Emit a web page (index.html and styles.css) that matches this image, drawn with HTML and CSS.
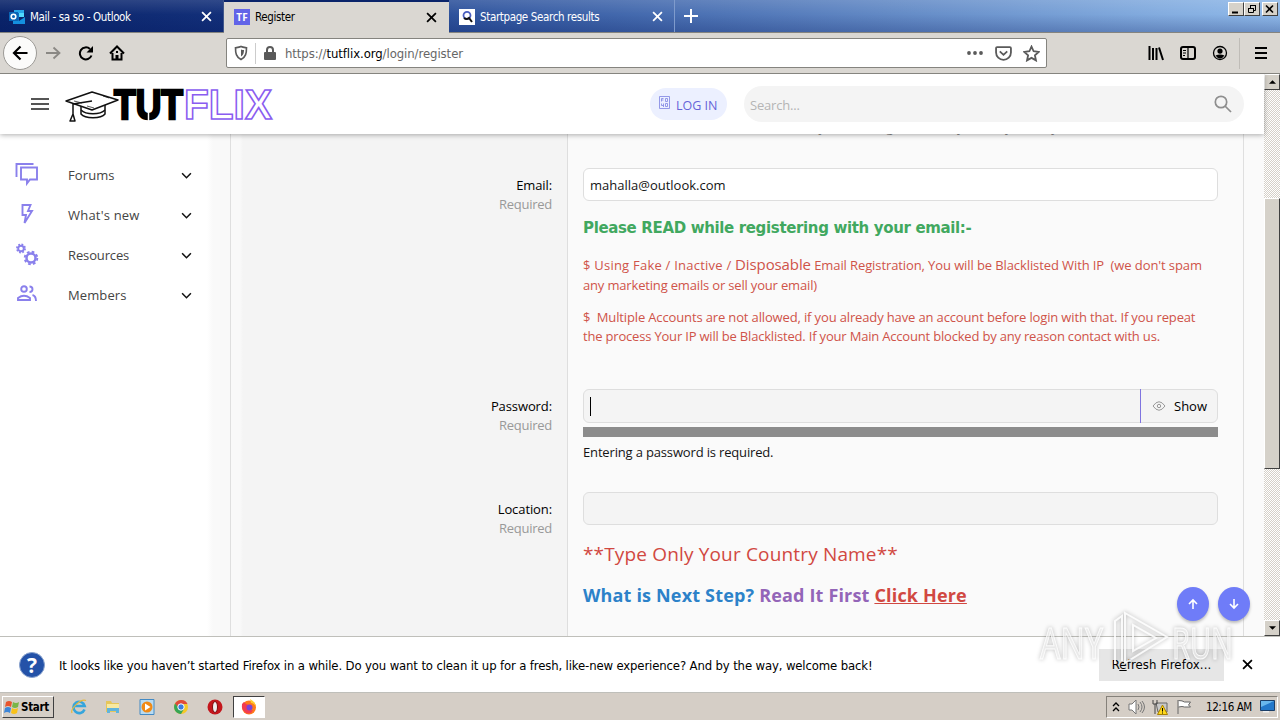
FILE: index.html
```html
<!DOCTYPE html>
<html lang="en">
<head>
  <meta charset="UTF-8">
  <title>Register</title>
  <link rel="stylesheet" href="styles.css">
</head>
<body>
  <div class="tabs">
    <div class="tab tab-first">
      <svg class="favicon" viewBox="0 0 16 16"><path fill="#28a8ea" d="M5 1h10v7H5z"/><path fill="#0f6cbd" d="M5 4h5v8H5z"/><path fill="#50d9ff" d="M10 4h5v4h-5z"/><path fill="#1490df" d="M4 9l6 3 6-4v7H4z"/><path fill="#0a64b4" d="M0 3h9v9H0z"/><circle cx="4.5" cy="7.5" r="2.3" fill="none" stroke="#fff" stroke-width="1.6"/></svg>
      <span class="tab-title">Mail - sa so - Outlook</span>
      <svg class="close" viewBox="0 0 10 10"><path d="M1 1l8 8M9 1L1 9"/></svg>
    </div>
    <div class="tab tab-active">
      <span class="favicon tf">TF</span>
      <span class="tab-title">Register</span>
      <svg class="close" viewBox="0 0 10 10"><path d="M1 1l8 8M9 1L1 9"/></svg>
    </div>
    <div class="tab tab-last">
      <svg class="favicon" viewBox="0 0 16 16"><path fill="#fff" d="M0 0h16v16H0z"/><circle cx="8" cy="6.3" r="3.5" fill="none" stroke="#4a5fc0" stroke-width="1.8"/><path d="M5 9a4 4 0 0 0 5 0l3 4" fill="none" stroke="#111" stroke-width="2"/></svg>
      <span class="tab-title">Startpage Search results</span>
      <svg class="close" viewBox="0 0 10 10"><path d="M1 1l8 8M9 1L1 9"/></svg>
    </div>
    <svg class="plus" viewBox="0 0 14 14"><path d="M7 0v14M0 7h14"/></svg>
    <div class="win-buttons">
      <span class="win-btn"><svg viewBox="0 0 12 10"><path d="M2 8.5h6" stroke-width="2"/></svg></span>
      <span class="win-btn"><svg viewBox="0 0 12 10"><path d="M4.500 4V1.500h5v5H8M2.500 4.500h5v4h-5zM4 1.500h6M2 4.500h6"/></svg></span>
      <span class="win-btn win-close"><svg viewBox="0 0 12 10"><path d="M2 1.500l7 7M9 1.500l-7 7" stroke-width="1.600"/></svg></span>
    </div>
  </div>

  <div class="toolbar">
    <span class="back"><svg viewBox="0 0 16 16"><path d="M15 8H2M8 1.500L1.500 8 8 14.500"/></svg></span>
    <svg class="tool fwd" viewBox="0 0 16 16"><path d="M1 8h13M8.500 2.500L14.500 8 8.500 13.500"/></svg>
    <svg class="tool reload" viewBox="0 0 16 16"><path d="M13.500 10.500A6 6 0 1 1 12 4"/><path d="M15 1v6.500H8.500z" fill="#000" stroke="none"/></svg>
    <svg class="tool home" viewBox="0 0 16 16"><path d="M1 8.500L8 1.500l7 7M3.500 8v6.500h9V8"/><path d="M6.500 15v-5h3v5zM7 6h2v2H7z" fill="#000" stroke="none"/></svg>
    <div class="urlbar">
      <svg class="shield" viewBox="0 0 16 16"><path d="M8 1.500c2 1 4 1 5.500 1.200C13.500 8 13 12 8 14.500 3 12 2.500 8 2.500 2.700 4 2.500 6 2.500 8 1.500z"/><path d="M8 4.500v7C10.500 10 11 7.500 11 5c-1 0-2-.1-3-.5z" fill="#5a5a5a" stroke="none"/></svg>
      <span class="url-sep"></span>
      <svg class="lock" viewBox="0 0 14 16"><path d="M4 8V5a3 3 0 0 1 6 0v3" fill="none" stroke="#5a5a5a" stroke-width="2"/><rect x="1" y="7" width="12" height="8" rx="1" fill="#5a5a5a"/></svg>
      <span class="url">https://<b>tutflix.org</b>/login/register</span>
      <svg class="dots" viewBox="0 0 16 4"><circle cx="2" cy="2" r="1.900"/><circle cx="8" cy="2" r="1.900"/><circle cx="14" cy="2" r="1.900"/></svg>
      <svg class="u-icon" viewBox="0 0 16 16"><path d="M2 2h12q1 0 1 1v4a7 7 0 0 1-14 0V3q0-1 1-1zM4.500 6L8 9.300 11.500 6"/></svg>
      <svg class="u-icon" viewBox="0 0 16 16"><path d="M8 1.500l2 4.400 4.800.6-3.600 3.200 1 4.800L8 12.100l-4.200 2.400 1-4.800L1.200 6.500 6 5.900z"/></svg>
    </div>
    <svg class="tool lib" viewBox="0 0 16 16"><path d="M1.500 1v14M5 3v12M8.500 3v12M11 2.500L15 15"/></svg>
    <svg class="tool side" viewBox="0 0 16 16"><rect x="1" y="2" width="14" height="12" rx="2"/><path d="M8 2v12M3 5.500h3M3 8h3M3 10.500h2" stroke-width="1.200"/></svg>
    <svg class="tool acct" viewBox="0 0 16 16"><circle cx="8" cy="8" r="6.500" stroke-width="1.300"/><path d="M8 3.500a2.600 2.600 0 1 1 0 5.200 2.600 2.600 0 0 1 0-5.200zM3.500 10.500q4.500-2 9 0-2 3-4.500 3t-4.500-3z" fill="#000" stroke="none"/></svg>
    <span class="tool-sep"></span>
    <svg class="tool burger" viewBox="0 0 16 16"><path d="M2 3h12M2 8h12M2 13h12"/></svg>
  </div>

  <div class="viewport">
    <div class="page">
      <header class="site-header">
        <svg class="menu" viewBox="0 0 18 14"><path d="M0 2h18M0 7h18M0 12h18"/></svg>
        <svg class="logo" viewBox="0 0 210 40">
          <g fill="#fff" stroke="#111" stroke-width="1.500" stroke-linejoin="round">
            <path d="M16 19v11c4 5 20 5 24 0V19"/>
            <path d="M16 26c5 5 19 5 24 0" fill="none"/>
            <path d="M1 17L27 8l26 8-26 10z"/>
            <path d="M27 17L8 20v12M8 30l-3 7h5z" fill="none"/>
            <path d="M9 17l8 2M38 12l6 2M22 22l7 2" fill="none" stroke-width=".7"/>
          </g>
          <text x="49" y="35" class="tut" textLength="69" lengthAdjust="spacingAndGlyphs">TUT</text>
          <path d="M83.500 27v12" stroke="#fff" stroke-width="1.500"/>
          <text x="119" y="35" class="flix" textLength="88" lengthAdjust="spacingAndGlyphs">FLIX</text>
        </svg>
        <a class="login"><svg viewBox="0 0 11 13"><path d="M.5.500h10v12H.5zM2.500 5.500v-3h2M2.500 4h2M6.500 2.500h2v3h-2zM2.500 7.500v2h2M4.500 7.500v3.500M6.500 7.500h2v3h-2z"/></svg><span>LOG IN</span></a>
        <div class="search"><span>Search...</span><svg viewBox="0 0 18 18"><circle cx="7" cy="7" r="5.700"/><path d="M11 11l6 6"/></svg></div>
      </header>
      <div class="main">
        <nav class="sidebar">
          <a class="nav-item"><svg class="nav-icon" viewBox="0 0 24 24"><path d="M1.500 14V1h17M6 4.500h16v12h-7l-3 4v-4H6z"/></svg><span class="n1">Forums</span><svg class="chev" viewBox="0 0 10 6"><path d="M1 1l4 4 4-4"/></svg></a>
          <a class="nav-item"><svg class="nav-icon" viewBox="0 0 24 24"><path d="M7.500 2h8l-2.500 6h4L9.500 20l1.500-8H7.500z"/></svg><span class="n2">What's new</span><svg class="chev" viewBox="0 0 10 6"><path d="M1 1l4 4 4-4"/></svg></a>
          <a class="nav-item"><svg class="nav-icon" viewBox="0 0 24 24"><circle cx="6" cy="5.500" r="2.800"/><circle cx="6" cy="5.500" r="4" stroke-dasharray="1.700 1.440"/><circle cx="16" cy="15" r="4.500" stroke-width="2.500"/><circle cx="16" cy="15" r="6.300" stroke-dasharray="2.700 2.240"/></svg><span class="n3">Resources</span><svg class="chev" viewBox="0 0 10 6"><path d="M1 1l4 4 4-4"/></svg></a>
          <a class="nav-item"><svg class="nav-icon" viewBox="0 0 24 24"><circle cx="9" cy="6" r="2.800"/><path d="M3 17v-2q6-4.500 12 0v2zM14.500 3.500c4 0 4 5.500 0 5.500M17.500 12q3.500 1 3.500 6"/></svg><span class="n4">Members</span><svg class="chev" viewBox="0 0 10 6"><path d="M1 1l4 4 4-4"/></svg></a>
        </nav>
        <div class="form">
          <div class="row row-name">
            <div class="label"></div>
            <div class="field"><div class="hint">This is the name that will be shown with your messages. You may use any name you wish.</div></div>
          </div>
          <div class="row row-email">
            <div class="label"><span>Email:</span><small>Required</small></div>
            <div class="field">
              <div class="input filled">mahalla@outlook.com</div>
              <div class="read">Please READ while registering with your email:-</div>
              <p class="warn"><span class="w1">$ Using Fake / Inactive / </span><big>Disposable</big><span class="w2"> Email Registration, You will be Blacklisted With IP&nbsp; (we don't spam</span><br><span class="w3">any marketing emails or sell your email)</span></p>
              <p class="warn second"><span class="w4">$&nbsp; Multiple Accounts are not allowed, if you already have an account before login with that. If you repeat</span><br><span class="w5">the process Your IP will be Blacklisted. If your Main Account blocked by any reason contact with us.</span></p>
            </div>
          </div>
          <div class="row row-pass">
            <div class="label"><span>Password:</span><small>Required</small></div>
            <div class="field">
              <div class="input password"><span class="caret"></span><span class="show"><svg viewBox="0 0 14 10"><path d="M1 5q6-8.500 12 0-6 8.500-12 0z"/><circle cx="7" cy="5" r="1.700"/></svg>Show</span></div>
              <div class="meter"></div>
              <div class="meter-text">Entering a password is required.</div>
            </div>
          </div>
          <div class="row row-loc">
            <div class="label"><span>Location:</span><small>Required</small></div>
            <div class="field">
              <div class="input"></div>
              <div class="country">**Type Only Your Country Name**</div>
              <div class="next"><span class="blue">What is Next Step?</span> <span class="purple">Read It First</span> <a>Click Here</a></div>
            </div>
          </div>
        </div>
      </div>
      <div class="jump">
        <span><svg viewBox="0 0 12 12"><path d="M6 11V2M2 6l4-4 4 4"/></svg></span>
        <span><svg viewBox="0 0 12 12"><path d="M6 1v9M2 6l4 4 4-4"/></svg></span>
      </div>
    </div>
    <div class="scrollbar">
      <span class="sb-btn"><svg viewBox="0 0 8 4"><path d="M0 4l4-4 4 4z"/></svg></span>
      <span class="thumb"></span>
      <span class="sb-btn"><svg viewBox="0 0 8 4"><path d="M0 0l4 4 4-4z"/></svg></span>
    </div>
  </div>

  <div class="notice">
    <span class="help">?</span>
    <span class="notice-text">It looks like you haven’t started Firefox in a while. Do you want to clean it up for a fresh, like-new experience? And by the way, welcome back!</span>
    <span class="refresh">R<u>e</u>fresh Firefox...</span>
    <svg class="close" viewBox="0 0 10 10"><path d="M1 1l8 8M9 1L1 9"/></svg>
  </div>

  <div class="taskbar">
    <div class="start"><svg viewBox="0 0 16 16"><path fill="#e8552d" d="M2 3q3-2 6 0L7 8Q4 6 1 8z"/><path fill="#7ab648" d="M9 3q3 2 6 0l-1 5q-3 2-6 0z"/><path fill="#3d86d8" d="M1 9q3-2 6 0l-1 5q-3-2-6 0z"/><path fill="#f9c21a" d="M8 9q3 2 6 0l-1 5q-3 2-6 0z"/></svg>Start</div>
    <span class="task"><svg viewBox="0 0 16 16"><path d="M13.500 10.500A5.700 5.700 0 1 1 13.700 7H3" fill="none" stroke="#35a5dc" stroke-width="2.600"/><path d="M1 14C-1 10 10-1 15 1.500" fill="none" stroke="#e9b93a" stroke-width="1.200"/></svg></span>
    <span class="task"><svg viewBox="0 0 16 16"><path fill="#e6c65a" d="M1 2h5l1 2h7v9H1z"/><path fill="#f8e9a0" d="M2 5h12v5H2z"/><path fill="#61b4dc" d="M2 9h12v5h-3v-2H5v2H2z"/></svg></span>
    <span class="task"><svg viewBox="0 0 16 16"><path fill="#b8dbf2" stroke="#438ac4" d="M1 .5h14v15H1z"/><circle cx="8" cy="8" r="5.500" fill="#f08a16"/><path fill="#fff" d="M6 4.500v7L11.500 8z"/></svg></span>
    <span class="task"><svg viewBox="0 0 16 16"><circle cx="8" cy="8" r="7" fill="#f5c828"/><path fill="#e04a3a" d="M2 4.500A7 7 0 0 1 14.500 5H8L5 9z"/><path fill="#37a556" d="M2 4.500A7 7 0 0 0 8 15l3-5-5-1z"/><circle cx="8" cy="8" r="3.200" fill="#3b7ce0" stroke="#fff"/></svg></span>
    <span class="task"><svg viewBox="0 0 16 16"><circle cx="8" cy="8" r="7.500" fill="#c4161c"/><ellipse cx="8" cy="8" rx="2.500" ry="5.500" fill="#eee" stroke="#7d0b0e"/></svg></span>
    <span class="task current"><svg viewBox="0 0 16 16"><circle cx="8" cy="8.500" r="7" fill="#ff7a1a"/><path fill="#ffcb2e" d="M9 0q6 3 6 8-2-4-5-4z"/><path fill="#f23c50" d="M1 5l2-2 2 2 3 1-2 3q2 3 6 2-2 5-7 3-5-3-4-9z"/><circle cx="8.500" cy="8.500" r="3" fill="#7a42d8"/></svg></span>
    <div class="tray">
      <svg class="up" viewBox="0 0 8 10"><path d="M1 4l3-3 3 3M1 9l3-3 3 3"/></svg>
      <svg class="vol" viewBox="0 0 17 16"><path d="M1 5h3l4-4v14l-4-4H1z" fill="#fff"/><path d="M10 5q2 3 0 6M12 3q4 5 0 10M14 2q5 6 0 12" fill="none"/></svg>
      <svg class="net" viewBox="0 0 16 16"><path d="M4 4h11v9H6z" fill="#c8c8c8" stroke="#666"/><path d="M1 1v4h4V1M3 5v10" fill="none" stroke="#444"/><path d="M10.500 6l5 9.500h-10z" fill="#ffd91a" stroke="#a98100"/><path d="M10.500 9v3.500M10.500 13.500v1" stroke="#000"/></svg>
      <svg class="flag" viewBox="0 0 16 16"><path d="M1.500 1v14M2 1.500q4 0 6 1.500h6l-2 3 2 2H8Q6 7 2 8" fill="#fff" stroke="#666"/></svg>
      <span class="clock">12:16 AM</span>
      <svg class="desk" viewBox="0 0 15 13"><path fill="#2378ca" stroke="#1b3e68" d="M.5.500h14v10H.5z"/><path fill="#68b7ed" d="M1 1h13L1 7z"/><path fill="#f0f0f0" d="M3 11h6v1.500H3z"/></svg>
    </div>
  </div>

  <svg class="watermark" viewBox="0 0 200 64">
    <text x="3" y="53" textLength="63" lengthAdjust="spacingAndGlyphs">ANY</text>
    <path d="M78 58V15l7-5v45M88 7l42 24-42 26zM96 19v26l23-13z"/>
    <text x="135" y="53" textLength="61" lengthAdjust="spacingAndGlyphs">RUN</text>
  </svg>
</body>
</html>
```

FILE: styles.css
```css
:root {--chrome: #dad7d2;--ui-font: 'DejaVu Sans Condensed', 'DejaVu Sans', sans-serif;--page-font: 'Open Sans', 'Noto Sans', sans-serif;--purple: #8a80ec;}
* { box-sizing: border-box; }
body {margin: 0;width: 1280px;height: 720px;overflow: hidden;display: flex;flex-direction: column;font-family: var(--ui-font);font-size: 12px;color: #000;position: relative;}
svg {display: block;flex: none;fill: none;}

/* browser tabs */
.tabs {height: 33px;flex: none;display: flex;align-items: stretch;background: linear-gradient(rgba(255,255,255,.12), rgba(255,255,255,0) 45%, rgba(0,20,90,.25)), linear-gradient(90deg, #0a246a 0, #13307a 225px, #3257a0 480px, #5379b9 760px, #83acdf 1160px, #8fb9e9 1280px);border-bottom: 1px solid #85847f;}
.tab {width: 225px;display: flex;align-items: center;padding: 1px 11px 0 9px;color: #fff;}
.tab-first {width: 224px;border-right: 1px solid #41578a;}
.tab-active {background: var(--chrome);color: #000;border-top: 2px solid #0a246a;height: 33px;padding: 0 12px 1px 10px;}
.tab-last {width: 226px;padding-left: 10px;border-right: 1px solid #7f9bcc;}
.favicon {width: 16px;height: 16px;margin-right: 5px;}
.tf {background: #6264e8;color: #fff;font: bold 10px/16px 'Open Sans', sans-serif;text-align: center;}
.tab-title {flex: 1;white-space: nowrap;font-size: 11.5px;letter-spacing: -.36px;}
.close {width: 11px;height: 11px;stroke: currentColor;stroke-width: 1.6;}
.plus {width: 14px;height: 14px;margin: 9px 0 0 9px;stroke: #fff;stroke-width: 2;}
.win-buttons {display: flex;margin: 2px 2px 0 auto;}
.win-btn {width: 16px;height: 14px;background: #d6d2ca;border: 1px solid;border-color: #fff #404040 #404040 #fff;padding: 1px;}
.win-btn svg {width: 12px;height: 10px;stroke: #000;}
.win-close {margin-left: 2px;}

/* navigation toolbar */
.toolbar {height: 41px;flex: none;display: flex;align-items: center;background: var(--chrome);border-bottom: 1px solid #85847f;}
.back {width: 34px;height: 34px;margin-left: 3px;border: 1px solid #9c9a96;border-radius: 50%;background: #fbfbfa;display: flex;align-items: center;justify-content: center;}
.back svg {width: 17px;height: 16px;stroke: #000;stroke-width: 2.2;}
.tool {width: 16px;height: 16px;stroke: #000;stroke-width: 2;}
.fwd {margin-left: 8px;stroke: #8a8884;stroke-width: 1.8;}
.reload {margin-left: 17px;}
.home {margin-left: 15px;}
.urlbar {width: 821px;height: 30px;margin-left: 101px;background: #fff;border: 1px solid #85847f;border-radius: 2px;display: flex;align-items: center;padding: 0 6px;}
.shield {width: 16px;height: 16px;stroke: #5a5a5a;stroke-width: 1.6;}
.url-sep {width: 1px;height: 21px;background: #ccc;margin: 0 7px 0 6px;}
.lock {width: 14px;height: 16px;}
.url {flex: 1;margin-left: 8px;color: #666;font-size: 13px;letter-spacing: -.07px;}
.url b {color: #000;font-weight: normal;}
.dots {width: 16px;height: 4px;fill: #5a5a5a;margin-right: 12px;}
.u-icon {width: 17px;height: 17px;stroke: #5a5a5a;stroke-width: 1.7;}
.u-icon + .u-icon {margin-left: 11px;}
.lib {margin-left: 101px;}
.side {margin-left: 16px;}
.acct {margin-left: 16px;}
.tool-sep {width: 1px;height: 31px;background: #bfbcb7;margin-left: 11px;}
.burger {margin-left: 13px;}

/* web page */
.viewport {height: 562px;flex: none;display: flex;overflow: hidden;}
.page {width: 1264px;display: flex;flex-direction: column;position: relative;background: #fafafa;font-family: var(--page-font);font-size: 13px;}
.site-header {height: 60px;flex: none;display: flex;align-items: center;background: #fff;box-shadow: 0 1px 5px rgba(0,0,0,.32);position: relative;z-index: 1;}
.menu {width: 18px;height: 14px;margin-left: 31px;stroke: #555;stroke-width: 2;}
.logo {width: 210px;height: 40px;margin: 0 0 0 16px;overflow: visible;}
.tut {font: bold 42px 'Liberation Sans', sans-serif;fill: #000;stroke: #000;stroke-width: 2.5;}
.flix {font: bold 42px 'Liberation Sans', sans-serif;fill: none;stroke: #8a5cf0;stroke-width: 1.6;}
.login {width: 77px;height: 32px;margin-left: 375px;border-radius: 16px;background: #ecf0ff;color: #6664d8;display: flex;align-items: center;padding-left: 9px;gap: 6px;font-size: 12.5px;white-space: nowrap;}
.login span, .search span {padding-top: 2px;}
.login svg {width: 11px;height: 13px;stroke: #7d83e2;stroke-width: .8;margin-bottom: 3px;}
.search {width: 500px;height: 36px;margin-left: 17px;border-radius: 18px;background: #f4f4f4;color: #b5b5b5;display: flex;align-items: center;justify-content: space-between;padding: 0 12px 0 6px;letter-spacing: -.2px;}
.search svg {width: 18px;height: 18px;stroke: #8e8e8e;stroke-width: 1.7;}
.main {height: 502px;display: flex;}
.sidebar {width: 230px;background: linear-gradient(90deg, #fff 207px, #f9f9f9 213px, #f9f9f9);padding: 21px 38px 0 15px;}
.nav-item {height: 40px;display: flex;align-items: center;color: #444;}
.nav-icon {width: 24px;height: 24px;stroke: var(--purple);stroke-width: 1.9;}
.nav-item span {flex: 1;margin-left: 29px;letter-spacing: .1px;}
.nav-item .n2 {letter-spacing: .2px;}
.nav-item .n3 {letter-spacing: -.13px;}
.chev {width: 11px;height: 7px;stroke: #111;stroke-width: 1.4;}
.form {width: 1014px;flex: none;border: solid #dfdfdf;border-width: 0 1px;background: linear-gradient(90deg, #f9f9f9 9px, #f4f4f4 12px, #f4f4f4 336px, #dedede 336px, #dedede 337px, #fafafa 337px);}
.row {display: flex;}
.row-name {height: 34px;}
.row-email {height: 221px;}
.row-pass {height: 103px;}
.label {width: 321px;padding-top: 8px;text-align: right;line-height: 19px;}
.label span, .label small {display: block;letter-spacing: -.1px;}
.label small {font-size: 13px;color: #999;letter-spacing: -.25px;}
.field {width: 635px;margin-left: 31px;white-space: nowrap;}
.hint {margin-top: -16px;line-height: 18px;color: #8a8a8a;letter-spacing: -.22px;}
.input {height: 33px;border: 1px solid #dedede;border-radius: 6px;background: #f4f4f4;line-height: 33px;padding-left: 6px;}
.filled {background: #fff;color: #141414;}
.read {margin-top: 16px;font: bold 15px/22px 'DejaVu Sans', sans-serif;color: #41a85f;letter-spacing: -.35px;}
.warn {margin: 16px 0 0;line-height: 20px;color: #cf5349;}
.warn big {font-size: 15px;line-height: 18px;letter-spacing: -.1px;}
.warn.second {margin-top: 13px;line-height: 19px;}
.w1 {letter-spacing: .23px;}
.w2 {letter-spacing: -.1px;}
.w3 {letter-spacing: -.17px;}
.w4 {letter-spacing: -.14px;}
.w5 {letter-spacing: -.19px;}
.password {height: 34px;display: flex;align-items: center;}
.caret {width: 1px;height: 19px;background: #000;}
.show {width: 77px;height: 34px;margin-left: auto;border-left: 1px solid #7f74e0;display: flex;align-items: center;padding-left: 11px;gap: 8px;}
.show svg {width: 14px;height: 10px;stroke: #999;}
.meter {height: 10px;margin-top: 4px;background: #8c8c8c;}
.meter-text {line-height: 20px;margin-top: 5px;color: #141414;letter-spacing: -.16px;}
.country {margin-top: 16px;line-height: 26px;font-size: 19px;color: #d14841;letter-spacing: .16px;}
.next {margin-top: 15px;line-height: 26px;font-size: 18px;font-weight: bold;letter-spacing: .17px;}
.blue {color: #2c82c9;}
.purple {color: #9365b8;}
.next a {color: #d14841;text-decoration: underline;}
.jump {position: absolute;left: 1177px;top: 513px;display: flex;gap: 9px;}
.jump span {width: 32px;height: 34px;border-radius: 50%;background: #6f7cf8;display: flex;align-items: center;justify-content: center;box-shadow: 0 2px 3px rgba(0,0,0,.25);}
.jump svg {width: 12px;height: 12px;stroke: #fff;stroke-width: 1.6;}
.scrollbar {width: 16px;display: flex;flex-direction: column;background: conic-gradient(#d5d0c8 25%, #fff 0 50%, #d5d0c8 0 75%, #fff 0) 0 0 / 2px 2px;}
.sb-btn {height: 16px;background: #d5d1c9;border: 1px solid;border-color: #fff #404040 #404040 #fff;display: flex;align-items: center;justify-content: center;}
.sb-btn svg {width: 7px;height: 4px;fill: #000;}
.thumb {height: 271px;margin: 108px 0 151px;background: #d5d1c9;border: 1px solid;border-color: #fff #404040 #404040 #fff;}

/* notification bar */
.notice {height: 57px;flex: none;display: flex;align-items: center;background: #fff;border: solid #bfbfba;border-width: 1px 0;}
.help {width: 26px;height: 26px;margin-left: 19px;border-radius: 50%;background: #2452a8;border: 1px solid #8ba4ce;color: #fff;font: bold 21px/25px 'Open Sans', sans-serif;text-align: center;}
.notice-text {width: 1040px;margin-left: 14px;padding-top: 1px;white-space: nowrap;font-size: 13px;letter-spacing: -.14px;}
.refresh {width: 125px;height: 32px;flex: none;background: #e6e6e6;line-height: 32px;text-align: center;font-size: 13px;letter-spacing: .12px;}
.notice .close {margin-left: 18px;}

/* taskbar */
.taskbar {height: 27px;flex: none;display: flex;align-items: center;background: #d5cec6;padding: 0 2px;}
.start {width: 52px;height: 22px;display: flex;align-items: center;gap: 1px;padding-left: 1px;border: 1px solid;border-color: #fff #404040 #404040 #fff;font-weight: bold;font-size: 11.5px;letter-spacing: -.3px;}
.start svg {width: 16px;height: 16px;}
.task {width: 32px;height: 22px;margin-left: 2px;display: flex;align-items: center;justify-content: center;}
.start + .task {margin-left: 9px;}
.task svg {width: 16px;height: 16px;}
.current {background: #fff;border: 1px solid;border-color: #404040 #fff #fff #404040;}
.tray {width: 172px;height: 22px;margin-left: auto;border: 1px solid;border-color: #85817a #fff #fff #85817a;display: flex;align-items: center;}
.up {width: 8px;height: 10px;margin-left: 5px;stroke: #000;stroke-width: 1.3;}
.vol {width: 17px;height: 16px;margin-left: 8px;stroke: #777;}
.net {width: 16px;height: 16px;margin-left: 7px;}
.flag {width: 17px;height: 16px;margin-left: 8px;}
.clock {margin-left: 13px;font-size: 11.5px;white-space: nowrap;width: 47px;letter-spacing: -.4px;}
.desk {width: 15px;height: 13px;margin-left: 7px;}

/* watermark over the bottom right corner */
.watermark {position: absolute;left: 1037px;top: 606px;width: 200px;height: 64px;stroke: #fff;stroke-opacity: .85;stroke-width: 2;filter: drop-shadow(0 0 2px rgba(0,0,0,.35));}
.watermark text {font: 44px 'Open Sans', sans-serif;fill: #fff;fill-opacity: .5;stroke-width: 1;}
```
